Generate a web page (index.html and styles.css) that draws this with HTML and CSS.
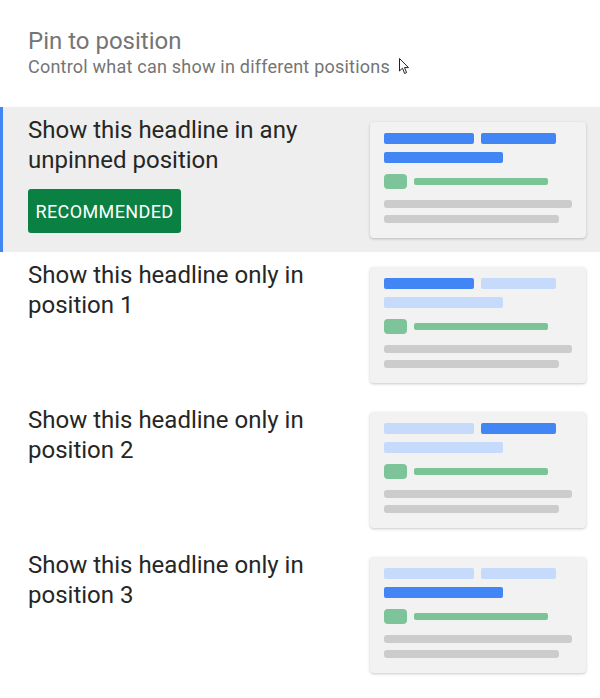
FILE: index.html
```html
<!DOCTYPE html>
<html>
<head>
<meta charset="utf-8">
<link rel="stylesheet" href="styles.css">
</head>
<body>
<div class="page">
  <header class="head">
    <div class="title">Pin to position</div>
    <div class="subtitle">Control what can show in different positions</div>
    <svg class="cursor" width="12" height="17" viewBox="0 0 12 17"><path d="M0.5 0.5 L0.5 13 L3.5 10.2 L5.6 15.5 L7.6 14.6 L5.5 9.6 L9.5 9.6 Z" fill="#fff" stroke="#222" stroke-width="1" stroke-linejoin="round"/></svg>
  </header>
  <div class="list">
    <div class="row selected">
      <div class="text">
        <div class="label">Show this headline in any unpinned position</div>
        <div class="badge">RECOMMENDED</div>
      </div>
      <div class="card">
        <div class="bars"><span class="bar b1 on"></span><span class="bar b2 on"></span></div>
        <div class="bars"><span class="bar b3 on"></span></div>
        <div class="url"><span class="sq"></span><span class="gl"></span></div>
        <span class="gray g1"></span>
        <span class="gray g2"></span>
      </div>
    </div>
    <div class="row">
      <div class="text">
        <div class="label">Show this headline only in position 1</div>
      </div>
      <div class="card">
        <div class="bars"><span class="bar b1 on"></span><span class="bar b2"></span></div>
        <div class="bars"><span class="bar b3"></span></div>
        <div class="url"><span class="sq"></span><span class="gl"></span></div>
        <span class="gray g1"></span>
        <span class="gray g2"></span>
      </div>
    </div>
    <div class="row">
      <div class="text">
        <div class="label">Show this headline only in position 2</div>
      </div>
      <div class="card">
        <div class="bars"><span class="bar b1"></span><span class="bar b2 on"></span></div>
        <div class="bars"><span class="bar b3"></span></div>
        <div class="url"><span class="sq"></span><span class="gl"></span></div>
        <span class="gray g1"></span>
        <span class="gray g2"></span>
      </div>
    </div>
    <div class="row">
      <div class="text">
        <div class="label">Show this headline only in position 3</div>
      </div>
      <div class="card">
        <div class="bars"><span class="bar b1"></span><span class="bar b2"></span></div>
        <div class="bars"><span class="bar b3 on"></span></div>
        <div class="url"><span class="sq"></span><span class="gl"></span></div>
        <span class="gray g1"></span>
        <span class="gray g2"></span>
      </div>
    </div>
  </div>
</div>
</body>
</html>
```
FILE: styles.css
```css
* { box-sizing: border-box; }
html, body { margin: 0; padding: 0; background: #fff; }
body { font-family: Roboto, "Noto Sans", Arial, sans-serif; width: 600px; height: 698px; overflow: hidden; }

.head { position: relative; padding: 27px 28px 0 28px; height: 107px; }
.title { font-size: 24px; line-height: 28px; color: #757575; }
.subtitle { font-size: 18px; line-height: 20px; color: #757575; margin-top: 2px; letter-spacing: 0.22px; }
.cursor { position: absolute; left: 399px; top: 58px; }

.row { display: flex; justify-content: space-between; height: 145px; padding: 0 14px 0 28px; }
.row.selected { background: #eeeeee; border-left: 3px solid #4285f4; padding-left: 25px; }
.text { padding-top: 8px; width: 320px; }
.label { font-size: 24px; line-height: 30px; color: #262626; }
.badge { display: inline-flex; align-items: center; justify-content: center; margin-top: 14px; width: 153px; height: 44px; background: #0b8043; color: #fff; border-radius: 3px; font-size: 18px; font-weight: 400; letter-spacing: 0.4px; }

.card { margin-top: 15px; width: 216px; height: 116px; background: #f2f2f2; border-radius: 4px; box-shadow: 0 1px 3px rgba(0,0,0,0.22); padding: 11px 14px 0 14px; display: flex; flex-direction: column; align-items: flex-start; }
.bars { display: flex; gap: 7px; }
.bars + .bars { margin-top: 8px; }
.bar { display: block; height: 11px; border-radius: 2px; background: #c6dafc; }
.bar.on { background: #4285f4; }
.b1 { width: 90px; }
.b2 { width: 75px; }
.b3 { width: 119px; }
.url { display: flex; align-items: center; gap: 7px; margin-top: 11px; }
.sq { display: block; width: 23px; height: 15px; border-radius: 4px; background: #7dc49a; }
.gl { display: block; width: 134px; height: 7px; border-radius: 2px; background: #7bc496; }
.gray { display: block; height: 8px; border-radius: 3px; background: #cccccc; }
.g1 { width: 188px; margin-top: 11px; }
.g2 { width: 175px; margin-top: 7px; }
```
